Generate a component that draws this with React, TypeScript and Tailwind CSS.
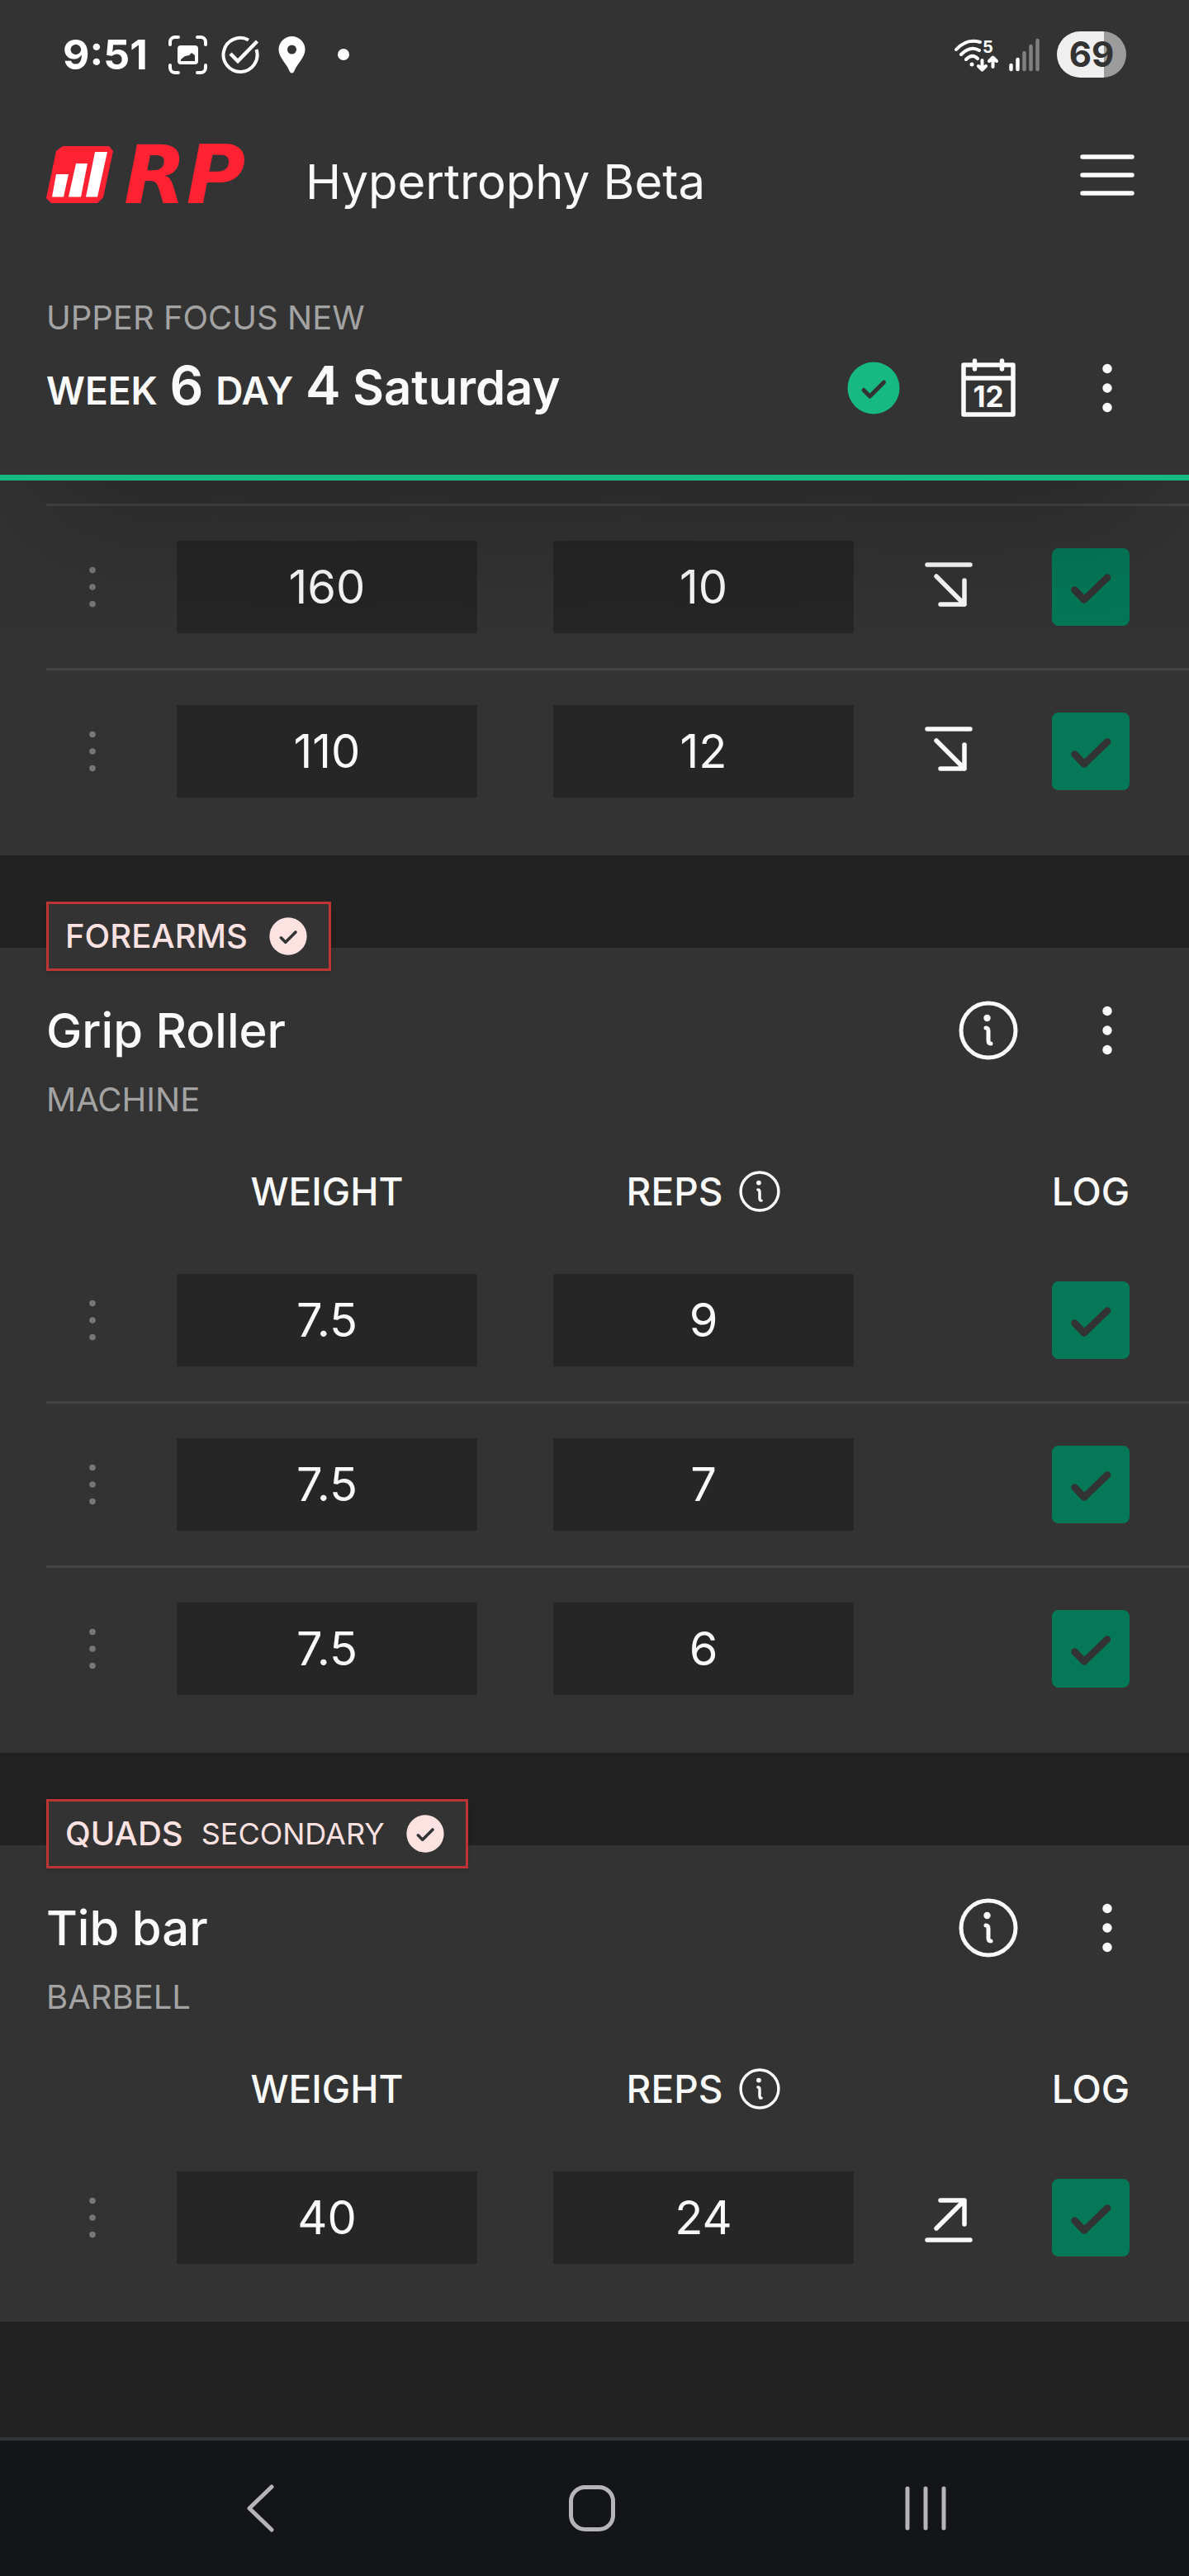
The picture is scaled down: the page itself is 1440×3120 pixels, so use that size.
import { useState } from "react";

type Trend = "up" | "down";

type WorkoutSet = {
  weight: string;
  reps: string;
  trend?: Trend;
};

type Exercise = {
  name: string;
  equipment: string;
  muscle: string;
  secondary?: boolean;
  sets: WorkoutSet[];
};

const previousSets: WorkoutSet[] = [
  { weight: "160", reps: "10", trend: "down" },
  { weight: "110", reps: "12", trend: "down" },
];

const exercises: Exercise[] = [
  {
    name: "Grip Roller",
    equipment: "Machine",
    muscle: "Forearms",
    sets: [
      { weight: "7.5", reps: "9" },
      { weight: "7.5", reps: "7" },
      { weight: "7.5", reps: "6" },
    ],
  },
  {
    name: "Tib bar",
    equipment: "Barbell",
    muscle: "Quads",
    secondary: true,
    sets: [{ weight: "40", reps: "24", trend: "up" }],
  },
];

function StatusBar() {
  return (
    <div className="flex h-[132px] items-center justify-between px-[76px] text-white">
      <div className="flex items-center">
        <span className="w-32 text-[50px] leading-[60px] font-bold">9:51</span>
        <svg width="47" height="47" viewBox="0 0 47 47" fill="none" stroke="currentColor" strokeWidth="4" strokeLinecap="round">
          <path d="M2 11V8a6 6 0 0 1 6-6h4M35 2h4a6 6 0 0 1 6 6v3M45 36v3a6 6 0 0 1-6 6h-4M12 45H8a6 6 0 0 1-6-6v-3" />
          <path
            fill="currentColor"
            stroke="none"
            fillRule="evenodd"
            d="M15 12h17a4 4 0 0 1 4 4v15a4 4 0 0 1-4 4H15a4 4 0 0 1-4-4V16a4 4 0 0 1 4-4ZM15 31h17v-7l-4-3-3 3-5 1-5 4Z"
          />
        </svg>
        <svg className="ml-[17px]" width="46" height="46" viewBox="0 0 46 46" fill="none" stroke="currentColor" strokeWidth="4">
          <path d="M33 5.500A20.500 20.500 0 1 0 42.500 17" />
          <path d="M11 22l9 9L43.500 7" strokeWidth="4.500" />
        </svg>
        <svg className="ml-[23px]" width="33" height="45" viewBox="0 0 33 45" fill="currentColor" fillRule="evenodd">
          <path d="M16.500 0A16 16 0 0 0 .5 16c0 10 10 17 13.500 27q2.500 3 5 0C22.500 33 32.500 26 32.500 16A16 16 0 0 0 16.500 0Zm0 10.500a5.500 5.500 0 1 1 0 11 5.500 5.500 0 0 1 0-11Z" />
        </svg>
        <span className="ml-[39px] size-3.5 rounded-full bg-white" />
      </div>

      <div className="flex items-center">
        <svg width="54" height="44" viewBox="0 0 54 44" fill="none" stroke="currentColor" strokeWidth="4" strokeLinecap="round">
          <path d="M2 16C11 6 21 4 31 7M8 22c7-7 15-9 22-5M14 28c5-5 10-5 14-1" />
          <circle cx="21" cy="34" r="2.500" fill="currentColor" stroke="none" />
          <path d="M33.500 29v11M29 36l4.500 4.500L38 36M46.500 37V26M42 30l4.500-4.500L51 30" strokeLinejoin="round" />
          <text x="34" y="20" fontSize="20" fontWeight="700" fill="currentColor" stroke="none">
            5
          </text>
        </svg>
        <svg className="ml-3" width="38" height="42" viewBox="0 0 38 42" fill="none" stroke="currentColor" strokeWidth="4.500" strokeLinecap="round">
          <path d="M2.500 34v5M10.500 27v12" />
          <path className="text-[#808080]" stroke="currentColor" d="M18.500 19v20M26.500 11v28M34.500 4v35" />
        </svg>
        <div className="ml-5 flex h-14 w-[84px] items-center justify-center rounded-full bg-linear-to-r from-[#efefef] from-68% to-[#9c9c9c] to-68% text-[42px] leading-[56px] font-bold text-[#333333]">
          69
        </div>
      </div>
    </div>
  );
}

function Logo() {
  return (
    <div className="flex w-[260px] items-center">
      <svg width="82" height="70" viewBox="0 0 82 70">
        <path d="M20 0H76l5 6L69 62l-7 7H6l-6-6L12 6Z" fill="#ff2232" />
        <path d="M12 34H27L21 61.500H7ZM36 21H50L42 61.500H27ZM59 7H74L62 61.500H48Z" fill="#fff" />
      </svg>
      <span className="ml-3 font-['DejaVu_Sans',sans-serif] text-[98px] leading-[120px] font-bold text-[#ff2232] italic">RP</span>
    </div>
  );
}

function MoreButton({ label }: { label: string }) {
  return (
    <button type="button" aria-label={label} className="flex h-[72px] w-[66px] items-center justify-center">
      <svg width="12" height="60" viewBox="0 0 12 60" fill="currentColor">
        <circle cx="6" cy="6.500" r="5.700" />
        <circle cx="6" cy="30" r="5.700" />
        <circle cx="6" cy="53.500" r="5.700" />
      </svg>
    </button>
  );
}

function InfoIcon({ size, strokeWidth }: { size: number; strokeWidth: number }) {
  return (
    <svg width={size} height={size} viewBox="0 0 72 72" fill="none" stroke="currentColor" strokeLinecap="round" strokeLinejoin="round">
      <circle cx="36" cy="36" r="33" strokeWidth={strokeWidth} />
      <circle cx="34.500" cy="21" r="4.200" fill="currentColor" stroke="none" />
      <path d="M33 33q3 0 3 4v11q0 4 3 4" strokeWidth="5" />
    </svg>
  );
}

function CircleCheck({ size }: { size: number }) {
  return (
    <svg width={size} height={size} viewBox="0 0 64 64" fill="none">
      <circle cx="32" cy="32" r="31.500" fill="currentColor" />
      <path d="M20 34.500l7.500 7.500L44.500 25" stroke="#333333" strokeWidth="5" strokeLinecap="round" strokeLinejoin="round" />
    </svg>
  );
}

function TrendIcon({ trend }: { trend: Trend }) {
  return (
    <svg
      className="mx-auto"
      width="58"
      height="60"
      viewBox="0 0 58 60"
      fill="none"
      stroke="currentColor"
      strokeWidth="5.500"
      strokeLinecap="round"
      strokeLinejoin="round"
    >
      {trend === "down" ? (
        <path d="M3 3h52M14 17l34 34M48 22v29H19" />
      ) : (
        <path d="M3 57h52M14 43L48 9M48 38V9H19" />
      )}
    </svg>
  );
}

function Header() {
  return (
    <header className="relative z-10 border-b-[7px] border-[#15b981] bg-[#333333] shadow-[0_88px_175px_-42px_rgba(0,0,0,0.25)]">
      <StatusBar />

      <div className="flex h-40 items-center pl-14 pr-[66px]">
        <Logo />
        <span className="pt-4 pl-[54px] text-[58px] leading-[72px]">Hypertrophy Beta</span>
        <button type="button" aria-label="Open menu" className="ml-auto">
          <svg width="66" height="50" viewBox="0 0 66 50" stroke="currentColor" strokeWidth="5.500" strokeLinecap="round">
            <path d="M3 3h60M3 25h60M3 47h60" />
          </svg>
        </button>
      </div>

      <div className="pt-[63px] pb-[69px] pl-14 pr-[66px]">
        <p className="text-[40px] leading-[60px] text-[#a3a3a3] uppercase">Upper Focus New</p>
        <div className="mt-[19px] flex h-[72px] items-center justify-between">
          <h1 className="text-[58px] leading-[72px] font-semibold">
            <span className="text-[46px] uppercase">Week</span> <span className="text-[64px]">6</span>{" "}
            <span className="text-[46px] uppercase">Day</span> <span className="text-[64px]">4</span> Saturday
          </h1>
          <div className="flex items-center">
            <span className="text-[#15b981]">
              <CircleCheck size={64} />
            </span>
            <button type="button" aria-label="Calendar" className="ml-[74px]">
              <svg width="66" height="74" viewBox="0 0 66 74" fill="none" stroke="currentColor" strokeWidth="5.500" strokeLinecap="round" strokeLinejoin="round">
                <path d="M3 9h60v60H3ZM3 25h60M16.500 4v10M49.500 4v10" />
                <text x="33" y="60" textAnchor="middle" fontSize="35" fontWeight="700" fill="currentColor" stroke="none">
                  12
                </text>
              </svg>
            </button>
            <span className="ml-[78px]">
              <MoreButton label="Workout options" />
            </span>
          </div>
        </div>
      </div>
    </header>
  );
}

function SetRow({ set, label, first, last }: { set: WorkoutSet; label: string; first: boolean; last: boolean }) {
  const [weight, setWeight] = useState(set.weight);
  const [reps, setReps] = useState(set.reps);
  const [logged, setLogged] = useState(true);

  const cell = `${first ? "" : "border-t-[3px] border-[#444444]"} pt-[42px] ${last ? "pb-[70px]" : "pb-[42px]"}`;
  const field = "block h-28 w-full bg-[#262626] text-center text-[56px] outline-none";

  return (
    <tr>
      <td className={cell}>
        <button type="button" aria-label={`${label} options`} className="mx-auto block text-[#777777]">
          <svg width="8" height="50" viewBox="0 0 8 50" fill="currentColor">
            <circle cx="4" cy="4.500" r="3.800" />
            <circle cx="4" cy="25" r="3.800" />
            <circle cx="4" cy="45.500" r="3.800" />
          </svg>
        </button>
      </td>
      <td className={`${cell} px-[46px]`}>
        <input aria-label={`${label} weight`} className={field} inputMode="decimal" value={weight} onChange={(e) => setWeight(e.target.value)} />
      </td>
      <td className={`${cell} px-[46px]`}>
        <input aria-label={`${label} reps`} className={field} inputMode="numeric" value={reps} onChange={(e) => setReps(e.target.value)} />
      </td>
      <td className={cell}>{set.trend && <TrendIcon trend={set.trend} />}</td>
      <td className={`${cell} pr-4`}>
        <label className="mx-auto grid size-[94px]">
          <input
            type="checkbox"
            aria-label={`Log ${label}`}
            checked={logged}
            onChange={(e) => setLogged(e.target.checked)}
            className="peer col-start-1 row-start-1 size-full appearance-none rounded-lg border-4 border-[#047857] checked:bg-[#047857]"
          />
          <svg
            className="pointer-events-none col-start-1 row-start-1 hidden peer-checked:block"
            width="94"
            height="94"
            viewBox="0 0 94 94"
            fill="none"
            stroke="#333333"
            strokeWidth="8.500"
            strokeLinecap="round"
            strokeLinejoin="round"
          >
            <path d="M27.500 50.500L39 62.500 67 35.500" />
          </svg>
        </label>
      </td>
    </tr>
  );
}

function SetsTable({ name, sets, showHead, continued }: { name: string; sets: WorkoutSet[]; showHead?: boolean; continued?: boolean }) {
  return (
    <div className="pl-14">
      <table className="w-full table-fixed border-separate border-spacing-0" aria-label={name}>
        <colgroup>
          <col className="w-28" />
          <col />
          <col />
          <col className="w-[138px]" />
          <col className="w-[222px]" />
        </colgroup>
        {showHead && (
          <thead>
            <tr className="h-[116px] text-[46px] leading-[60px] uppercase">
              <td />
              <th className="p-0 font-medium">Weight</th>
              <th className="p-0 font-medium">
                <span className="flex items-center justify-center gap-5">
                  Reps
                  <button type="button" aria-label="About reps">
                    <InfoIcon size={50} strokeWidth={5} />
                  </button>
                </span>
              </th>
              <td />
              <th className="p-0 pr-4 font-medium">Log</th>
            </tr>
          </thead>
        )}
        <tbody>
          {sets.map((set, i) => (
            <SetRow
              key={i}
              set={set}
              label={`${name} set ${i + 1}`}
              first={i === 0 && !continued}
              last={i === sets.length - 1}
            />
          ))}
        </tbody>
      </table>
    </div>
  );
}

function ExerciseCard({ exercise }: { exercise: Exercise }) {
  return (
    <section className="mt-28 bg-[#333333]">
      <div className="flex px-14">
        {/* Muscle badge straddles the top edge of the card */}
        <div className="-mt-14 flex h-[84px] items-center border-[3px] border-[#bd3434] bg-[#333333] pr-[26px] pl-5 text-[40px] leading-[60px] font-medium text-[#fee2e2] uppercase shadow-md">
          {exercise.muscle}
          {exercise.secondary && <span className="ml-[22px] text-[36px] font-normal">Secondary</span>}
          <span className="ml-[26px]">
            <CircleCheck size={46} />
          </span>
        </div>
      </div>

      <div className="mt-9 flex h-[72px] items-center pl-14 pr-[66px]">
        <h2 className="text-[58px] leading-[72px] font-medium">{exercise.name}</h2>
        <button type="button" aria-label={`About ${exercise.name}`} className="ml-auto">
          <InfoIcon size={72} strokeWidth={5} />
        </button>
        <span className="ml-[75px]">
          <MoreButton label={`${exercise.name} options`} />
        </span>
      </div>
      <p className="mt-[18px] mb-[23px] px-14 text-[40px] leading-[60px] text-[#a3a3a3] uppercase">{exercise.equipment}</p>

      <SetsTable name={exercise.name} sets={exercise.sets} showHead />
    </section>
  );
}

function SystemNav() {
  return (
    <nav className="mt-auto flex h-[168px] items-center justify-between border-t-4 border-[#333436] bg-[#131519] pr-[292px] pl-[296px] text-[#b5b5b8]">
      <button type="button" aria-label="Back">
        <svg width="44" height="58" viewBox="0 0 44 58" fill="none" stroke="currentColor" strokeWidth="5" strokeLinecap="round" strokeLinejoin="round">
          <path d="M33 3L6 29l27 26" />
        </svg>
      </button>
      <button type="button" aria-label="Home">
        <svg width="56" height="56" viewBox="0 0 56 56" fill="none" stroke="currentColor" strokeWidth="5">
          <rect x="2.500" y="2.500" width="51" height="51" rx="17" />
        </svg>
      </button>
      <button type="button" aria-label="Recent apps">
        <svg width="54" height="56" viewBox="0 0 54 56" stroke="currentColor" strokeWidth="5" strokeLinecap="round">
          <path d="M5 4v48M27 4v48M49 4v48" />
        </svg>
      </button>
    </nav>
  );
}

export default function App() {
  return (
    <div className="flex min-h-screen flex-col bg-[#212121] font-['Inter',sans-serif] text-[#fafafa]">
      <Header />
      <main className="pb-[140px]">
        <section className="bg-[#333333] pt-7">
          <SetsTable name="Previous exercise" sets={previousSets} continued />
        </section>
        {exercises.map((exercise) => (
          <ExerciseCard key={exercise.name} exercise={exercise} />
        ))}
      </main>
      <SystemNav />
    </div>
  );
}
